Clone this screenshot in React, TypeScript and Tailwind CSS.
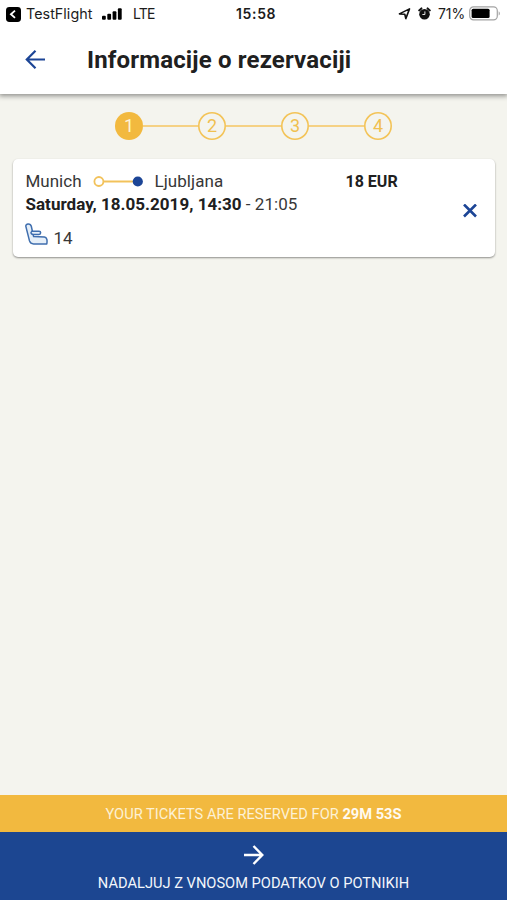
import React from "react";

const STEPS = [1, 2, 3, 4];

function StatusBar() {
  return (
    <div className="grid h-7 grid-cols-[236px_162px_1fr] items-center font-['Inter',sans-serif] text-[15px] leading-7 text-[#1c1c1c]">
      <div className="flex h-7 items-center pl-1.5">
        <svg width="15" height="15" viewBox="0 0 15 15">
          <rect width="15" height="15" rx="3.4" fill="#000" />
          <path d="M9 3.6 4.9 7.2 9 10.9" fill="none" stroke="#fff" strokeWidth="1.8" />
        </svg>
        <span className="ml-[5px] w-[67px] whitespace-nowrap text-[14.3px] tracking-[0.05px]">TestFlight</span>
        <svg className="mb-px ml-[9px]" width="20" height="12" viewBox="0 0 20 12" fill="#000">
          <rect x="0" y="7.8" width="3.8" height="3.9" rx="1" />
          <rect x="5.3" y="5.8" width="3.8" height="5.9" rx="1" />
          <rect x="10.6" y="3.3" width="3.8" height="8.4" rx="1" />
          <rect x="15.9" y="0.3" width="3.8" height="11.4" rx="1" />
        </svg>
        <span className="ml-[11px] text-[14px] tracking-[-0.8px]">LTE</span>
      </div>
      <span className="text-[14px] font-semibold tracking-[0.65px]">15:58</span>
      <div className="flex h-7 items-center">
        <svg className="mb-[2px]" width="13" height="13" viewBox="0 0 13 13">
          <path d="M1.4 6.9 11.5 1.9 7.8 11.6 6.8 7.2Z" fill="none" stroke="#111" strokeWidth="1.6" strokeLinejoin="round" />
        </svg>
        <svg className="mb-[2px] ml-[7px]" width="13" height="13" viewBox="0 0 13 13">
          <circle cx="6.5" cy="7.2" r="5.3" fill="#111" />
          <path d="M1.2 3.4 3.4 1.4M11.8 3.4 9.6 1.4" stroke="#111" strokeWidth="2" strokeLinecap="round" />
          <path d="M6.9 4.4v3.1H4.4" fill="none" stroke="#fff" strokeWidth="0.9" />
        </svg>
        <span className="ml-[7px] w-[28px] whitespace-nowrap text-[14px] tracking-[-0.1px]">71%</span>
        <svg className="mb-[2px] ml-[3px] shrink-0" width="32" height="15" viewBox="0 0 32 15">
          <rect x="0.7" y="0.9" width="27.6" height="13" rx="3.8" fill="#fff" stroke="#a3a3a3" strokeWidth="1.2" />
          <rect x="2.6" y="2.8" width="18" height="9.2" rx="1.5" fill="#000" />
          <path d="M29.7 5.2c1.6.7 1.6 3.7 0 4.4Z" fill="#a3a3a3" />
        </svg>
      </div>
    </div>
  );
}

function Header() {
  return (
    <header className="z-10 h-[94px] shrink-0 bg-white shadow-[0_1px_5px_1px_rgba(0,0,0,0.42)]">
      <StatusBar />
      <div className="flex h-16 items-center pl-[25px]">
        <svg width="21" height="20" viewBox="0 0 21 20" fill="none" stroke="#1c4596" strokeWidth="2.2">
          <path d="M20 9.5H2M10.5.8 1.8 9.5l8.7 8.7" />
        </svg>
        <h1 className="ml-[41px] whitespace-nowrap text-[24px] leading-8 font-bold tracking-[0.16px] text-[#202020]">Informacije o rezervaciji</h1>
      </div>
    </header>
  );
}

function Stepper() {
  return (
    <div className="flex h-[65px] items-center justify-center pb-px">
      {STEPS.map((step) => (
        <React.Fragment key={step}>
          {step > 1 && <div className="h-[2px] w-[55px] bg-[#f5d184]" />}
          <div
            className={
              step === 1
                ? "flex size-7 items-center justify-center rounded-full bg-[#f2b93f] text-[18px] leading-none text-[#fdf3d9]"
                : "flex size-7 items-center justify-center rounded-full text-[18px] leading-none text-[#f0c050] shadow-[inset_0_0_0_1.6px_#f3c357]"
            }
          >
            {step}
          </div>
        </React.Fragment>
      ))}
    </div>
  );
}

function SeatIcon() {
  return (
    <svg width="23" height="23" viewBox="0 0 23 23" fill="#e6eff8" stroke="#3f6eae" strokeWidth="1.5" strokeLinejoin="round" strokeLinecap="round">
      <path d="M.9 3.6C.2.2 5.5-.1 6.3 3.2L8.6 13.6l10.8.5c2.6.2 3 3.2 2.4 6.8H8.6c-2.4 0-3.5-1-4.1-3Z" />
      <path d="M6.8 8.2h7.2c2.2 0 2.2 3.3 0 3.3H8.5c-1.9 0-3.6-1.6-1.7-3.3Z" />
    </svg>
  );
}

function Reservation() {
  return (
    <section className="mx-3 ml-[13px] flex h-[98px] rounded-[5px] bg-white pl-[12.5px] text-[17px] text-[#373737] shadow-[0_1px_2px_rgba(0,0,0,0.42)]">
      <div className="w-[320px] pt-[11px]">
        <div className="flex h-[22px] items-center leading-[22px]">
          <span className="w-[67px]">Munich</span>
          <svg width="50" height="12" viewBox="0 0 50 12">
            <path d="M10.5 6.5H40" stroke="#f2c25b" strokeWidth="2" />
            <circle cx="5.9" cy="6.5" r="4.5" fill="#fff" stroke="#f2c25b" strokeWidth="1.8" />
            <circle cx="44.8" cy="6.5" r="5.1" fill="#1c4596" />
          </svg>
          <span className="ml-[12px] tracking-[0.05px]">Ljubljana</span>
        </div>
        <p className="mt-px h-[22px] whitespace-nowrap leading-[22px] tracking-[0.03px]">
          <strong className="text-[#202020]">Saturday, 18.05.2019, 14:30</strong> - 21:05
        </p>
        <div className="-ml-px mt-[8px] flex h-6 items-start">
          <SeatIcon />
          <span className="ml-[6px] pt-[3px] leading-6">14</span>
        </div>
      </div>
      <strong className="w-[117px] pt-[12px] text-[16px] leading-[22px] text-[#202020]">18 EUR</strong>
      <button className="self-center pt-[5px]" aria-label="Remove">
        <svg width="14" height="14" viewBox="0 0 14 14" stroke="#1c4596" strokeWidth="2.6">
          <path d="M1 .5 13 12.5M13 .5 1 12.5" />
        </svg>
      </button>
    </section>
  );
}

export default function App() {
  return (
    <main className="flex h-[900px] w-[507px] flex-col overflow-hidden bg-[#f4f4ee] font-['Roboto',sans-serif]">
      <Header />
      <Stepper />
      <Reservation />
      <footer className="mt-auto text-center text-[14.65px] text-[#f3f6fb]">
        <div className="h-[37px] bg-[#f2b93f] leading-[38px] text-[#fdf1d4]">
          YOUR TICKETS ARE RESERVED FOR <strong className="text-[#fffaf0]">29M 53S</strong>
        </div>
        <button className="flex h-[68px] w-full flex-col items-center bg-[#1c4691] pt-[13px]">
          <svg width="20" height="20" viewBox="0 0 20 20" fill="none" stroke="#fff" strokeWidth="2.4">
            <path d="M0 10h18M9.5 1l8.8 9-8.8 9" />
          </svg>
          <span className="mt-[7px] leading-[22px]">NADALJUJ Z VNOSOM PODATKOV O POTNIKIH</span>
        </button>
      </footer>
    </main>
  );
}
